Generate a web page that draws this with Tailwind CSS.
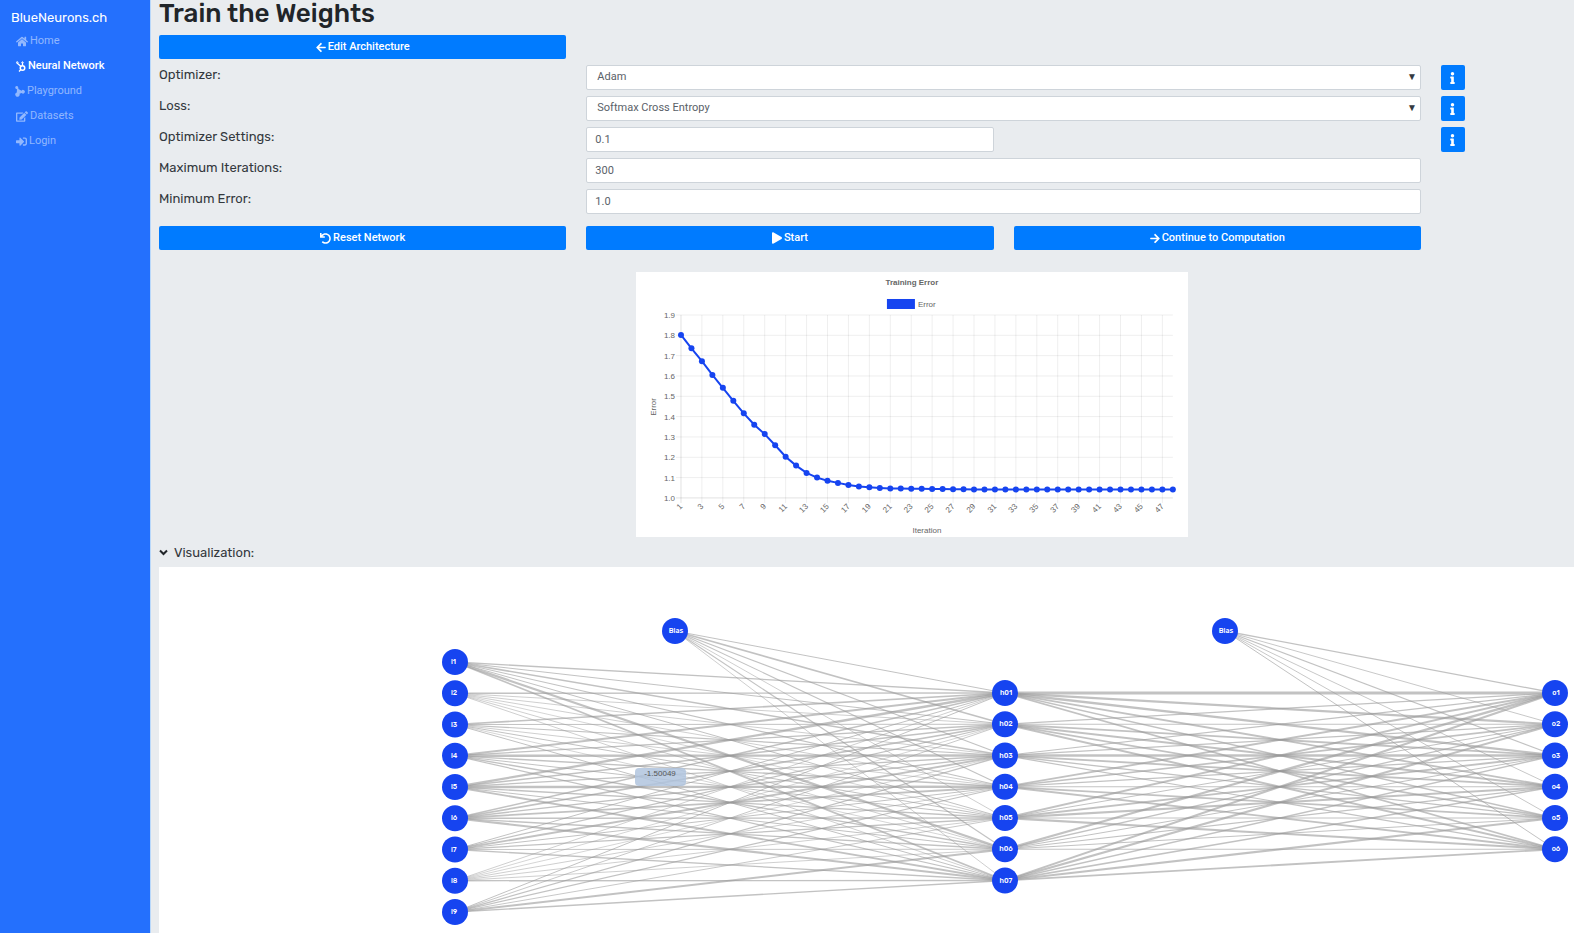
<!DOCTYPE html>
<html lang="en">
<head>
  <meta charset="UTF-8" />
  <meta name="viewport" content="width=device-width, initial-scale=1" />
  <title>Train - BlueNeurons.ch</title>
  <script src="https://cdn.jsdelivr.net/npm/@tailwindcss/browser@4"></script>
  <style>
    body {
      font-family: Rubik, Roboto, sans-serif;
    }
  </style>
</head>
<body class="bg-[#e9ecef] h-screen flex overflow-hidden text-[#212529]">
  <svg class="hidden">
    <symbol id="ic-left" viewBox="0 0 448 512"><path d="M257.5 445.1l-22.2 22.2c-9.4 9.4-24.6 9.4-33.9 0L7 273c-9.4-9.4-9.4-24.6 0-33.9L201.4 44.7c9.4-9.4 24.6-9.4 33.9 0l22.2 22.2c9.5 9.5 9.3 25-.4 34.3L136.6 216H424c13.3 0 24 10.7 24 24v32c0 13.3-10.7 24-24 24H136.6l120.5 114.8c9.8 9.3 10 24.8.4 34.3z"/></symbol>
    <symbol id="ic-right" viewBox="0 0 448 512"><path d="M190.5 66.9l22.2-22.2c9.4-9.4 24.6-9.4 33.9 0L441 239c9.4 9.4 9.4 24.6 0 33.9L246.6 467.3c-9.4 9.4-24.6 9.4-33.9 0l-22.2-22.2c-9.5-9.5-9.3-25 .4-34.3L311.4 296H24c-13.3 0-24-10.7-24-24v-32c0-13.3 10.7-24 24-24h287.4L190.9 101.2c-9.8-9.3-10-24.8-.4-34.3z"/></symbol>
    <symbol id="ic-play" viewBox="0 0 448 512"><path d="M424.4 214.7L72.4 6.6C43.8-10.3 0 6.1 0 47.9V464c0 37.5 40.7 60.1 72.4 41.3l352-208c31.4-18.5 31.5-64.1 0-82.6z"/></symbol>
    <symbol id="ic-undo" viewBox="0 0 512 512"><path d="M212.333 224.333H12c-6.627 0-12-5.373-12-12V12C0 5.373 5.373 0 12 0h48c6.627 0 12 5.373 12 12v78.112C117.773 39.279 184.26 7.47 258.175 8.007c136.906.994 246.448 111.623 246.157 248.532C504.041 393.258 393.12 504 256.333 504c-64.089 0-122.496-24.313-166.51-64.215-5.099-4.622-5.334-12.554-.467-17.42l33.967-33.967c4.474-4.474 11.662-4.717 16.401-.525C170.76 415.336 211.58 432 256.333 432c97.268 0 176-78.716 176-176 0-97.267-78.716-176-176-176-58.496 0-110.28 28.476-142.274 72.333h98.274c6.627 0 12 5.373 12 12v48c0 6.627-5.373 12-12 12z"/></symbol>
    <symbol id="ic-info" viewBox="0 0 192 512"><path d="M20 424.229h20V279.771H20c-11.046 0-20-8.954-20-20V212c0-11.046 8.954-20 20-20h112c11.046 0 20 8.954 20 20v212.229h20c11.046 0 20 8.954 20 20V492c0 11.046-8.954 20-20 20H20c-11.046 0-20-8.954-20-20v-47.771c0-11.046 8.954-20 20-20zM96 0C56.235 0 24 32.235 24 72s32.235 72 72 72 72-32.235 72-72S135.764 0 96 0z"/></symbol>
  </svg>

  <nav class="w-[151px] shrink-0 bg-[#2470fd] border-r border-[#b9d8fa] text-[11px] font-[Roboto] text-white/50 flex flex-col pt-2">
    <a href="#" class="pl-[11px] mb-px font-[Rubik,Roboto] text-[13px] leading-5 text-white">BlueNeurons.ch</a>
    <a href="#" class="pl-4 h-[25px] flex items-center gap-0.5">
      <svg class="h-[11px] w-3" viewBox="0 0 576 512" fill="currentColor"><path d="M280.37 148.26L96 300.11V464a16 16 0 0 0 16 16l112.06-.29a16 16 0 0 0 15.92-16V368a16 16 0 0 1 16-16h64a16 16 0 0 1 16 16v95.64a16 16 0 0 0 16 16.05L464 480a16 16 0 0 0 16-16V300L295.67 148.26a12.19 12.19 0 0 0-15.3 0zM571.6 251.47L488 182.56V44.05a12 12 0 0 0-12-12h-56a12 12 0 0 0-12 12v72.61L318.47 43a48 48 0 0 0-61 0L4.34 251.47a12 12 0 0 0-1.6 16.9l25.5 31A12 12 0 0 0 45.15 301l235.22-193.74a12.19 12.19 0 0 1 15.3 0L530.9 301a12 12 0 0 0 16.9-1.6l25.5-31a12 12 0 0 0-1.7-16.93z"/></svg>
      Home
    </a>
    <a href="#" class="pl-4 h-[25px] flex items-center gap-0.5 text-white font-medium">
      <svg class="h-[11px] w-[10px]" viewBox="0 0 20 22" fill="none" stroke="currentColor"><circle cx="13" cy="14" r="4.5" stroke-width="3"/><path d="M13 9V3M10 11L2 4M10 17l-4 4" stroke-width="2.6"/><circle cx="13" cy="3" r="1.4" stroke-width="2"/><circle cx="2.5" cy="3" r="1.6" stroke-width="2"/></svg>
      Neural Network
    </a>
    <a href="#" class="pl-[15px] h-[25px] flex items-center gap-0.5">
      <svg class="h-[11px] w-[10px]" viewBox="0 0 20 22" fill="currentColor"><path d="M3 0a3 3 0 0 1 3.400 3.600L7 6l6 3.500a3.600 3.600 0 1 1 .4 4.500L9 15.500A4.400 4.400 0 1 1 3.500 13L4 6.500A3.300 3.300 0 0 1 3 0z"/></svg>
      Playground
    </a>
    <a href="#" class="pl-4 h-[25px] flex items-center gap-0.5">
      <svg class="h-[11px] w-3" viewBox="0 0 576 512" fill="currentColor"><path d="M402.6 83.2l90.2 90.2c3.8 3.8 3.8 10 0 13.8L274.4 405.6l-92.8 10.3c-12.4 1.4-22.9-9.1-21.5-21.5l10.3-92.8L388.8 83.2c3.8-3.8 10-3.8 13.8 0zm162-22.9l-48.8-48.8c-15.2-15.2-39.9-15.2-55.2 0l-35.4 35.4c-3.8 3.8-3.8 10 0 13.8l90.2 90.2c3.8 3.8 10 3.8 13.8 0l35.4-35.4c15.2-15.3 15.2-40 0-55.2zM384 346.2V448H64V128h229.8c3.2 0 6.2-1.3 8.5-3.5l40-40c7.6-7.6 2.2-20.5-8.5-20.5H48C21.5 64 0 85.5 0 112v352c0 26.5 21.5 48 48 48h352c26.5 0 48-21.5 48-48V306.2c0-10.7-12.9-16-20.5-8.5l-40 40c-2.2 2.3-3.5 5.3-3.5 8.5z"/></svg>
      Datasets
    </a>
    <a href="#" class="pl-4 h-[25px] flex items-center gap-0.5">
      <svg class="h-[11px] w-[11px]" viewBox="0 0 512 512" fill="currentColor"><path d="M416 448h-84c-6.6 0-12-5.4-12-12v-40c0-6.6 5.4-12 12-12h84c17.7 0 32-14.3 32-32V160c0-17.7-14.3-32-32-32h-84c-6.6 0-12-5.4-12-12V76c0-6.6 5.4-12 12-12h84c53 0 96 43 96 96v192c0 53-43 96-96 96zm-47-201L201 79c-15-15-41-4.5-41 17v96H24c-13.3 0-24 10.7-24 24v96c0 13.3 10.7 24 24 24h136v96c0 21.5 26 32 41 17l168-168c9.3-9.4 9.3-24.6 0-34z"/></svg>
      Login
    </a>
  </nav>

  <main class="grow min-w-0 pl-2 flex flex-col text-[13px]">
    <h1 class="text-[26px] leading-[28px] font-medium mb-[7px]">Train the Weights</h1>

    <form class="grid grid-cols-[407fr_407fr_407fr_133fr] gap-x-5 gap-y-[6px]">
      <button type="button" class="col-start-1 h-6 rounded-xs bg-[#007bff] text-white text-[11px] font-[Roboto] font-medium flex items-center justify-center gap-0.5"><svg class="h-[11px] w-[10px]" fill="currentColor"><use href="#ic-left"/></svg>Edit Architecture</button>

      <label for="optimizer" class="col-start-1 leading-5 text-[#33383d]">Optimizer:</label>
      <div class="col-span-2 relative text-[#5a6168]">
        <select id="optimizer" class="block appearance-none w-full h-[25px] bg-white border border-[#ced4da] rounded-xs pl-[10px] pb-px text-[11px] font-[Roboto]"><option>Adam</option></select>
        <span class="absolute right-1 top-[4px] text-[10px] leading-4 text-[#343a40] pointer-events-none">▼</span>
      </div>
      <button type="button" aria-label="Optimizer info" class="w-6 h-[25px] rounded-xs bg-[#007bff] text-white flex items-center justify-center"><svg class="h-3 w-[5px]" fill="currentColor"><use href="#ic-info"/></svg></button>

      <label for="loss" class="col-start-1 leading-5 text-[#33383d]">Loss:</label>
      <div class="col-span-2 relative text-[#5a6168]">
        <select id="loss" class="block appearance-none w-full h-[25px] bg-white border border-[#ced4da] rounded-xs pl-[10px] pb-px text-[11px] font-[Roboto]"><option>Softmax Cross Entropy</option></select>
        <span class="absolute right-1 top-[4px] text-[10px] leading-4 text-[#343a40] pointer-events-none">▼</span>
      </div>
      <button type="button" aria-label="Loss info" class="w-6 h-[25px] rounded-xs bg-[#007bff] text-white flex items-center justify-center"><svg class="h-3 w-[5px]" fill="currentColor"><use href="#ic-info"/></svg></button>

      <label for="rate" class="col-start-1 leading-5 text-[#33383d]">Optimizer Settings:</label>
      <input id="rate" type="text" value="0.1" class="min-w-0 h-[25px] bg-white border border-[#ced4da] rounded-xs px-2 pb-px text-[11px] font-[Roboto] text-[#5a6168]" />
      <button type="button" aria-label="Settings info" class="col-start-4 w-6 h-[25px] rounded-xs bg-[#007bff] text-white flex items-center justify-center"><svg class="h-3 w-[5px]" fill="currentColor"><use href="#ic-info"/></svg></button>

      <label for="maxiter" class="col-start-1 leading-5 text-[#33383d]">Maximum Iterations:</label>
      <input id="maxiter" type="text" value="300" class="col-span-2 h-[25px] bg-white border border-[#ced4da] rounded-xs px-2 pb-px text-[11px] font-[Roboto] text-[#5a6168]" />

      <label for="minerr" class="col-start-1 leading-5 text-[#33383d]">Minimum Error:</label>
      <input id="minerr" type="text" value="1.0" class="col-span-2 h-[25px] bg-white border border-[#ced4da] rounded-xs px-2 pb-px text-[11px] font-[Roboto] text-[#5a6168]" />

      <button type="button" class="col-start-1 mt-[6px] h-6 rounded-xs bg-[#007bff] text-white text-[11px] font-[Roboto] font-medium flex items-center justify-center gap-0.5"><svg class="h-[11px] w-[11px]" fill="currentColor"><use href="#ic-undo"/></svg>Reset Network</button>
      <button type="button" class="mt-[6px] h-6 rounded-xs bg-[#007bff] text-white text-[11px] font-[Roboto] font-medium flex items-center justify-center gap-0.5"><svg class="h-3 w-[10px]" fill="currentColor"><use href="#ic-play"/></svg>Start</button>
      <button type="button" class="mt-[6px] h-6 rounded-xs bg-[#007bff] text-white text-[11px] font-[Roboto] font-medium flex items-center justify-center gap-0.5"><svg class="h-[11px] w-[10px]" fill="currentColor"><use href="#ic-right"/></svg>Continue to Computation</button>
    </form>

    <div class="mt-[22px] ml-[33.7%] w-[39%] bg-white">
      <svg id="chart" class="block w-full h-auto font-['Liberation_Sans'] text-[8px]" viewBox="0 0 552 265" fill="#666"></svg>
    </div>

    <button type="button" class="mt-[7px] mb-[5px] flex items-center gap-[6px] leading-[18px] self-start text-[#33383d]">
      <svg class="w-[9px] h-[9px]" viewBox="0 0 9 9" fill="none" stroke="#212529" stroke-width="2"><path d="M1 2.5l3.5 3.5L8 2.5"/></svg>
      Visualization:
    </button>

    <div class="grow bg-white">
      <svg id="network" class="block w-full h-auto text-[7px]" viewBox="0 0 1415 366"></svg>
    </div>
  </main>

  <script>
    const NS = 'http://www.w3.org/2000/svg';
    function add(parent, tag, attrs, text) {
      const el = document.createElementNS(NS, tag);
      for (const k in attrs) el.setAttribute(k, attrs[k]);
      if (text) el.textContent = text;
      parent.appendChild(el);
      return el;
    }

    // training error chart
    const chart = document.getElementById('chart');
    const errors = [1.802, 1.736, 1.673, 1.605, 1.542, 1.478, 1.416, 1.36, 1.314, 1.259, 1.203, 1.159, 1.123, 1.1, 1.085,
      1.074, 1.064, 1.056, 1.052, 1.049, 1.047, 1.046, 1.045, 1.045, 1.044, 1.044, 1.043, 1.043, 1.042, 1.042];
    while (errors.length < 48) errors.push(1.041);
    const cx = i => 45 + i * 492 / 47;
    const cy = v => 226 - (v - 1) * 183 / 0.9;
    add(chart, 'text', { x: 276, y: 13, 'text-anchor': 'middle', 'font-weight': 'bold' }, 'Training Error');
    add(chart, 'rect', { x: 251, y: 27, width: 28, height: 10, fill: '#1644f0' });
    add(chart, 'text', { x: 282, y: 35 }, 'Error');
    for (let t = 0; t < 10; t++) {
      const y = cy(1 + t / 10);
      add(chart, 'path', { d: `M40 ${y}H537`, stroke: '#000', 'stroke-opacity': t ? 0.07 : 0.12 });
      add(chart, 'text', { x: 39, y: y + 3, 'text-anchor': 'end' }, (1 + t / 10).toFixed(1));
    }
    for (let i = 0; i < 48; i += 2) {
      const x = cx(i);
      add(chart, 'path', { d: `M${x} 43V231`, stroke: '#000', 'stroke-opacity': i ? 0.07 : 0.12 });
      add(chart, 'text', { x: 0, y: 0, 'text-anchor': 'end', transform: `translate(${x + 2} 235) rotate(-45)` }, String(i + 1));
    }
    add(chart, 'text', { x: 291, y: 261, 'text-anchor': 'middle' }, 'Iteration');
    add(chart, 'text', { 'text-anchor': 'middle', transform: 'translate(20 135) rotate(-90)' }, 'Error');
    add(chart, 'polyline', { points: errors.map((v, i) => cx(i) + ',' + cy(v)).join(' '), fill: 'none', stroke: '#1644f0', 'stroke-width': 2 });
    errors.forEach((v, i) => add(chart, 'circle', { cx: cx(i), cy: cy(v), r: 3, fill: '#1644f0' }));

    // network graph
    const net = document.getElementById('network');
    const column = (n, x, y, prefix) => Array.from({ length: n }, (_, i) => ({ x, y: y + i * 31.25, label: prefix + (i + 1) }));
    const inputs = column(9, 296, 95, 'i');
    const hidden = column(7, 846, 126, 'h0');
    const outputs = column(6, 1396, 126, 'o');
    const bias = [{ x: 516, y: 64, label: 'Bias' }, { x: 1066, y: 64, label: 'Bias' }];
    // line widths, one row per source node
    const w1 = [
      [1.3, 1, 1.6, 1.1, 1, 2.2, 1.7],
      [1.3, 0.8, 0.8, 0.8, 0.7, 0.8, 0.8],
      [1.6, 1, 1.2, 0.8, 1, 0.7, 1],
      [2, 1.3, 2.3, 1.4, 1, 1.3, 1.2],
      [2.3, 1.5, 1.3, 2.4, 1.3, 1, 1.8],
      [1.5, 1.7, 1.3, 1.8, 1.4, 1.3, 2.2],
      [1, 1.2, 1.9, 1, 1.3, 0.9, 1.3],
      [0.8, 0.7, 0.7, 0.8, 0.8, 0.8, 1.3],
      [1, 0.9, 1.3, 1.2, 0.9, 2, 1.4]
    ];
    const w2 = [
      [2.8, 2.2, 2.3, 1.8, 1.5, 1.7],
      [1.2, 1.1, 1.9, 2, 1.7, 2],
      [1.2, 1.3, 2.3, 1.9, 1.3, 1.2],
      [1.9, 1.7, 1.3, 1, 1.8, 1.9],
      [2, 1, 1.9, 2, 1, 2],
      [2.3, 1.3, 1, 1.2, 1, 1.2],
      [2.1, 2.1, 1.5, 1.5, 2.1, 1.9]
    ];
    function connect(from, to, widths) {
      from.forEach((a, i) => to.forEach((b, j) =>
        add(net, 'line', { x1: a.x, y1: a.y, x2: b.x, y2: b.y, stroke: '#999', 'stroke-opacity': 0.6, 'stroke-width': widths[i][j] })));
    }
    connect(inputs, hidden, w1);
    connect([bias[0]], hidden, [[1, 1.6, 1.1, 1.1, 0.8, 1.2, 0.8]]);
    connect(hidden, outputs, w2);
    connect([bias[1]], outputs, [[1.3, 0.9, 1.2, 0.9, 0.9, 1]]);
    [...inputs, ...hidden, ...outputs, ...bias].forEach(n => {
      add(net, 'circle', { cx: n.x, cy: n.y, r: 13, fill: '#1644f0' });
      add(net, 'text', { x: n.label[0] === 'i' ? n.x - 4 : n.x + 1, y: n.y + 2, fill: '#fff', 'font-weight': 500, 'text-anchor': n.label[0] === 'i' ? 'start' : 'middle' }, n.label);
    });
    // weight tooltip
    add(net, 'rect', { x: 476, y: 201, width: 51, height: 18, rx: 4, fill: '#b0c4de', 'fill-opacity': 0.85 });
    add(net, 'text', { x: 501, y: 209, fill: '#555', 'font-size': 8, 'font-family': 'Liberation Sans', 'text-anchor': 'middle' }, '-1.50049');
  </script>
</body>
</html>
